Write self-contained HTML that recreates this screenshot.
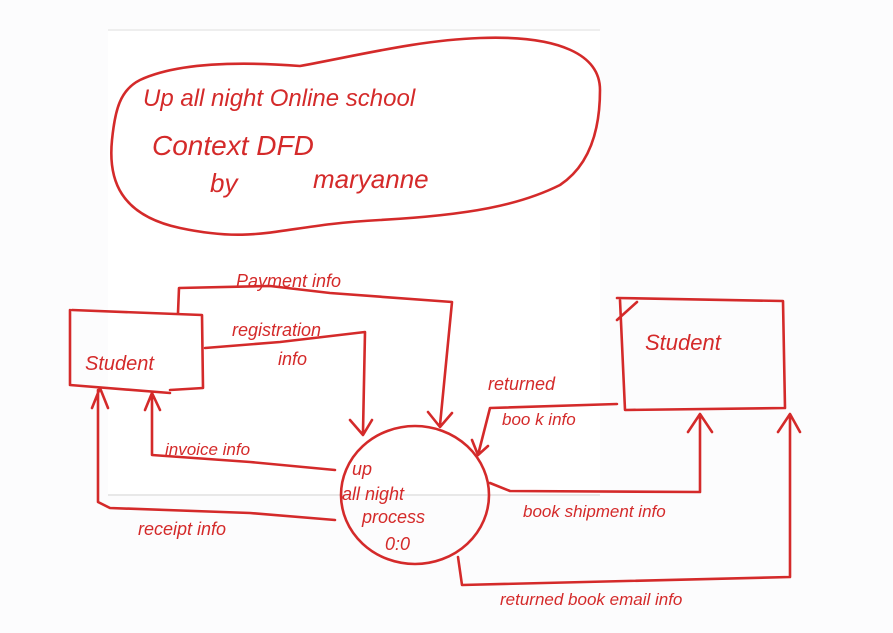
<!DOCTYPE html>
<html><head><style>
body{margin:0;background:#fcfcfd;}
svg{display:block}
text{font-family:"Liberation Sans",sans-serif;fill:#d42a2a;font-style:italic}
</style></head><body>
<svg width="893" height="633" viewBox="0 0 893 633">
<rect x="108" y="30" width="492" height="465" fill="#fff"/>
<line x1="108" y1="30" x2="600" y2="30" stroke="#eee" stroke-width="2"/>
<line x1="108" y1="495" x2="600" y2="495" stroke="#e8e8e8" stroke-width="2"/>
<g fill="none" stroke="#d42a2a" stroke-width="2.6" stroke-linecap="round" stroke-linejoin="round">
<path d="M300 66 C360 55 420 40 480 38 C560 35 600 55 600 90 C600 130 590 165 560 185 C520 205 470 215 380 220 C280 225 260 245 180 228 C120 215 108 180 112 140 C115 110 120 90 140 80 C170 66 220 60 300 66 Z"/>
<path d="M70 310 L70 385 M72 310 L202 315 L203 388 L170 390 M70 385 L170 393"/>
<path d="M617 298 L783 301 L785 408 L625 410 L620 300 M617 320 L637 302"/>
<ellipse cx="415" cy="495" rx="74" ry="69"/>
<path d="M178 313 L179 288 L270 286 L330 293 L452 302 L440 425 M428 412 L440 427 L452 413"/>
<path d="M205 348 L280 342 L365 332 L363 432 M350 420 L363 435 L372 420"/>
<path d="M335 470 L250 462 L152 455 L152 395 M145 410 L152 393 L160 410"/>
<path d="M335 520 L250 513 L110 508 L98 502 L98 390 M92 408 L100 388 L108 408"/>
<path d="M617 404 L490 408 L478 455 M472 440 L478 455 L488 446"/>
<path d="M490 483 L510 491 L700 492 L700 415 M688 432 L700 414 L712 432"/>
<path d="M458 557 L462 585 L790 577 L790 415 M778 432 L790 414 L800 432"/>
</g>
<text x="143" y="106" font-size="24">Up all night Online school</text>
<text x="152" y="155" font-size="28">Context DFD</text>
<text x="210" y="192" font-size="26">by</text>
<text x="313" y="188" font-size="26">maryanne</text>
<text x="85" y="370" font-size="20">Student</text>
<text x="645" y="350" font-size="22">Student</text>
<text x="236" y="287" font-size="18">Payment info</text>
<text x="232" y="336" font-size="18">registration</text>
<text x="278" y="365" font-size="18">info</text>
<text x="165" y="455" font-size="17">invoice info</text>
<text x="138" y="535" font-size="18">receipt info</text>
<text x="488" y="390" font-size="18">returned</text>
<text x="502" y="425" font-size="17">boo k info</text>
<text x="523" y="517" font-size="17">book shipment info</text>
<text x="500" y="605" font-size="17">returned book email info</text>
<text x="352" y="475" font-size="18">up</text>
<text x="342" y="500" font-size="18">all night</text>
<text x="362" y="523" font-size="18">process</text>
<text x="385" y="550" font-size="18">0:0</text>
</svg>
</body></html>
